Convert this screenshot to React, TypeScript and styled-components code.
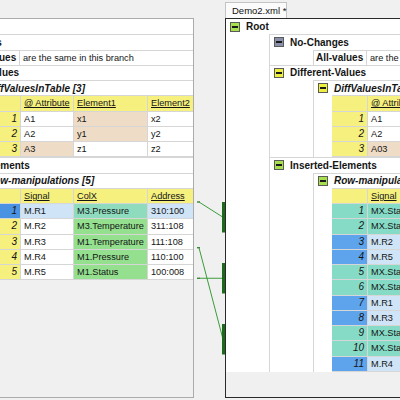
import React from 'react'
import styled, { createGlobalStyle, css } from 'styled-components'

const RH = 15.25
const TOP = 19
const LINE = '#d6d6d6'

const GlobalStyle = createGlobalStyle`
  html, body { margin: 0; padding: 0; background: #f0f0f0; }
  body { font-family: "Liberation Sans", Arial, sans-serif; }
`

const Page = styled.div`
  display: flex;
  align-items: flex-start;
  width: 400px;
  height: 400px;
  overflow: hidden;
  background: #f0f0f0;
`

const LeftPane = styled.div`
  flex: none;
  margin-top: 18px;
  width: 194px;
  height: 380px;
  box-sizing: border-box;
  border: 1px solid #ababab;
  border-left: none;
  overflow: hidden;
  background: #f0f0f0;
`

const Scrolled = styled.div<{ $scroll: number }>`
  margin-left: ${p => -p.$scroll}px;
`

const Gap = styled.div`
  flex: none;
  width: 31px;
  height: 400px;
`

const RightCol = styled.div`
  flex: none;
  display: flex;
  flex-direction: column;
  width: 260px;
`

const Tab = styled.div`
  margin-top: 2px;
  width: 62px;
  height: 16px;
  box-sizing: border-box;
  border: 1px solid #c4c4c4;
  border-bottom: none;
  background: #fbfbfb;
  font-family: "Liberation Sans", Arial, sans-serif;
  font-size: 9.5px;
  line-height: 15px;
  padding-left: 6px;
  color: #111;
  white-space: nowrap;
`

const Window = styled.div`
  height: 380px;
  box-sizing: border-box;
  border: 1px solid #2a2a2a;
  border-right: none;
  overflow: hidden;
  background: #f0f0f0;
`

const Tree = styled.div`
  width: 440px;
  background: #fff;
  font-family: "Liberation Sans", Arial, sans-serif;
  font-size: 9.2px;
  color: #151515;
`

const Head = styled.div<{ $lined?: boolean }>`
  display: flex;
  align-items: center;
  gap: 6px;
  height: ${RH}px;
  box-sizing: border-box;
  padding-left: 4px;
  ${p => p.$lined && css`border-top: 1px solid ${LINE};`}
`

const Toggle = styled.span<{ $fill: string }>`
  position: relative;
  flex: none;
  width: 10px;
  height: 10px;
  box-sizing: border-box;
  background: ${p => p.$fill};
  border: 1px solid #5a5a5a;
  &::after {
    content: '';
    position: absolute;
    left: 1px;
    right: 1px;
    top: 3px;
    height: 2px;
    background: #1a1a1a;
  }
`

const Name = styled.span<{ $italic?: boolean }>`
  font-weight: bold;
  font-size: 10px;
  white-space: nowrap;
  font-style: ${p => (p.$italic ? 'italic' : 'normal')};
`

const Children = styled.div`
  margin-left: 43px;
  border-left: 1px solid ${LINE};
`

const AttrRow = styled.div`
  display: flex;
  height: ${RH}px;
  box-sizing: border-box;
  border-top: 1px solid ${LINE};
  line-height: ${RH - 1}px;
`

const AttrName = styled.div`
  width: 53px;
  box-sizing: border-box;
  border-right: 1px solid ${LINE};
  padding-left: 2px;
  font-weight: bold;
  font-size: 10px;
  white-space: nowrap;
`

const AttrValue = styled.div`
  padding-left: 3px;
  white-space: nowrap;
`

const TableWrap = styled.div`
  display: grid;
  grid-template-columns: 36px 53px 74px 55px;
  margin-left: 18px;
  border-top: 1px solid ${LINE};
`

const Cell = styled.div<{ $bg?: string; $kind?: 'num' | 'head' }>`
  height: ${RH}px;
  box-sizing: border-box;
  border-bottom: 1px solid ${LINE};
  border-right: 1px solid ${LINE};
  background: ${p => p.$bg ?? '#fff'};
  padding: 0 3px;
  line-height: ${RH - 1}px;
  white-space: nowrap;
  overflow: hidden;
  ${p => p.$kind === 'num' && css`text-align: right; font-style: italic; font-size: 10px;`}
  ${p => p.$kind === 'head' && css`text-decoration: underline;`}
`

const YELLOW = '#f6f07f'
const TAN = '#eedcc6'
const GREEN = '#94e08f'
const TEAL = '#86dbc6'
const BLUE = '#5ea4ec'
const PALE = '#cfe4f7'
const SELBLUE = '#4a92e2'

type C = { text: string; bg?: string }
type Row = { num: string; numBg?: string; cells: C[] }

function Table({ head, rows }: { head: string[]; rows: Row[] }) {
  return (
    <TableWrap>
      <Cell $bg={YELLOW} />
      {head.map(h => (
        <Cell key={h} $bg={YELLOW} $kind="head">{h}</Cell>
      ))}
      {rows.map(r => (
        <React.Fragment key={r.num}>
          <Cell $bg={r.numBg ?? YELLOW} $kind="num">{r.num}</Cell>
          {r.cells.map((c, i) => (
            <Cell key={i} $bg={c.bg}>{c.text}</Cell>
          ))}
        </React.Fragment>
      ))}
    </TableWrap>
  )
}

function Node({ name, fill, italic, children }: { name: string; fill: string; italic?: boolean; children: React.ReactNode }) {
  return (
    <div>
      <Head $lined>
        <Toggle $fill={fill} />
        <Name $italic={italic}>{name}</Name>
      </Head>
      {italic ? children : <Children>{children}</Children>}
    </div>
  )
}

const G = '#a6e04c'
const Y = '#eeee3c'
const S = '#8a90aa'

function Document({ t1, t2, t1Name, t2Name }: { t1: Row[]; t2: Row[]; t1Name: string; t2Name: string }) {
  return (
    <Tree>
      <Head>
        <Toggle $fill={G} />
        <Name>Root</Name>
      </Head>
      <Children>
        <Node name="No-Changes" fill={S}>
          <AttrRow>
            <AttrName>All-values</AttrName>
            <AttrValue>are the same in this branch</AttrValue>
          </AttrRow>
        </Node>
        <Node name="Different-Values" fill={Y}>
          <Node name={t1Name} fill={Y} italic>
            <Table head={['@ Attribute', 'Element1', 'Element2']} rows={t1} />
          </Node>
        </Node>
        <Node name="Inserted-Elements" fill={G}>
          <Node name={t2Name} fill={G} italic>
            <Table head={['Signal', 'ColX', 'Address']} rows={t2} />
          </Node>
        </Node>
      </Children>
    </Tree>
  )
}

const leftT1: Row[] = [
  { num: '1', cells: [{ text: 'A1' }, { text: 'x1', bg: TAN }, { text: 'x2' }] },
  { num: '2', cells: [{ text: 'A2' }, { text: 'y1', bg: TAN }, { text: 'y2' }] },
  { num: '3', cells: [{ text: 'A3', bg: TAN }, { text: 'z1' }, { text: 'z2' }] },
]

const leftT2: Row[] = [
  { num: '1', numBg: SELBLUE, cells: [{ text: 'M.R1', bg: PALE }, { text: 'M3.Pressure', bg: '#8edcbd' }, { text: '310:100', bg: PALE }] },
  { num: '2', cells: [{ text: 'M.R2' }, { text: 'M3.Temperature', bg: GREEN }, { text: '311:108' }] },
  { num: '3', cells: [{ text: 'M.R3' }, { text: 'M1.Temperature', bg: GREEN }, { text: '111:108' }] },
  { num: '4', cells: [{ text: 'M.R4' }, { text: 'M1.Pressure', bg: GREEN }, { text: '110:100' }] },
  { num: '5', cells: [{ text: 'M.R5' }, { text: 'M1.Status', bg: GREEN }, { text: '100:008' }] },
]

const rightT1: Row[] = [
  { num: '1', cells: [{ text: 'A1' }, { text: 'x1' }, { text: 'x2' }] },
  { num: '2', cells: [{ text: 'A2' }, { text: 'y1' }, { text: 'y2' }] },
  { num: '3', cells: [{ text: 'A03', bg: TAN }, { text: 'z1' }, { text: 'z2' }] },
]

const ins = (n: string, s: string): Row => ({ num: n, numBg: TEAL, cells: [{ text: s, bg: TEAL }, { text: 'MX.Value', bg: TEAL }, { text: '000:000', bg: TEAL }] })
const mov = (n: string, s: string, c: string, a: string): Row => ({ num: n, numBg: BLUE, cells: [{ text: s, bg: PALE }, { text: c, bg: PALE }, { text: a, bg: PALE }] })

const rightT2: Row[] = [
  ins('1', 'MX.Status1'),
  ins('2', 'MX.Status2'),
  mov('3', 'M.R2', 'M3.Temperature', '311:108'),
  mov('4', 'M.R5', 'M1.Status', '100:008'),
  ins('5', 'MX.Status3'),
  ins('6', 'MX.Status4'),
  mov('7', 'M.R1', 'M3.Pressure', '310:100'),
  mov('8', 'M.R3', 'M1.Temperature', '111:108'),
  ins('9', 'MX.Status5'),
  ins('10', 'MX.Status6'),
  mov('11', 'M.R4', 'M1.Pressure', '110:100'),
]

// y of the top of row n (0 based) of the tree, in page coordinates
const rowY = (n: number) => TOP + n * RH

const links = [
  { from: rowY(12), to: [rowY(12), rowY(14)] },
  { from: rowY(15), to: [rowY(20), rowY(22)] },
  { from: rowY(17), to: [rowY(16), rowY(18)] },
]

function Connectors() {
  return (
    <svg width="31" height="400" viewBox="0 0 31 400">
      {links.map((l, i) => {
        const mid = (l.to[0] + l.to[1]) / 2
        return (
          <g key={i}>
            <line x1="3" y1={l.from} x2="6" y2={l.from} stroke="#1f6f1f" strokeWidth="1.2" />
            <line x1="5" y1={l.from} x2="29" y2={mid} stroke="#3a9d3a" strokeWidth="1" />
            <rect x="28" y={l.to[0]} width="3" height={l.to[1] - l.to[0]} fill="#1d6a1d" />
          </g>
        )
      })}
    </svg>
  )
}

export default function App() {
  return (
    <>
      <GlobalStyle />
      <Page>
        <LeftPane>
          <Scrolled $scroll={121}>
            <Document t1={leftT1} t2={leftT2} t1Name="DiffValuesInTable [3]" t2Name="Row-manipulations [5]" />
          </Scrolled>
        </LeftPane>
        <Gap>
          <Connectors />
        </Gap>
        <RightCol>
          <Tab>Demo2.xml *</Tab>
          <Window>
            <Document t1={rightT1} t2={rightT2} t1Name="DiffValuesInTable [3]" t2Name="Row-manipulations [11]" />
          </Window>
        </RightCol>
      </Page>
    </>
  )
}
